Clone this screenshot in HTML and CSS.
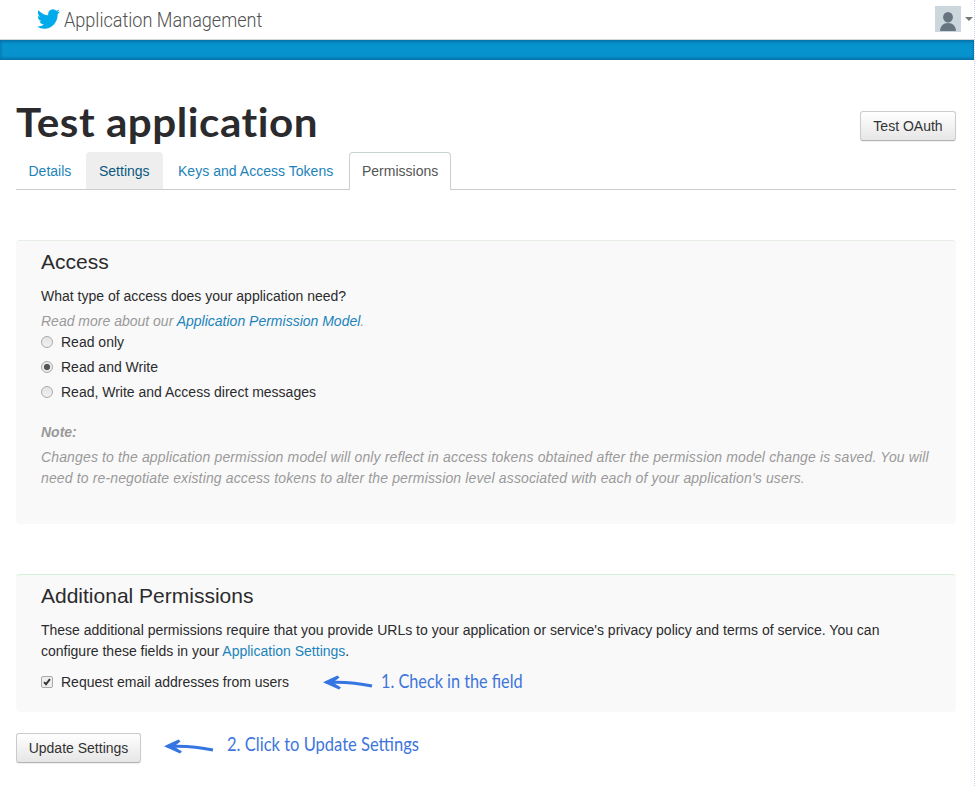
FILE: index.html
```html
<!DOCTYPE html>
<html lang="en">
<head>
<meta charset="utf-8">
<title>Application Management</title>
<link rel="stylesheet" href="styles.css">
</head>
<body>
<header class="topbar">
  <a class="brand">
    <svg class="bird" viewBox="0 2 24 20" preserveAspectRatio="none"><path d="M23.953 4.57a10 10 0 01-2.825.775 4.958 4.958 0 002.163-2.723c-.951.555-2.005.959-3.127 1.184a4.92 4.92 0 00-8.384 4.482C7.69 8.095 4.067 6.13 1.64 3.162a4.822 4.822 0 00-.666 2.475c0 1.71.87 3.213 2.188 4.096a4.904 4.904 0 01-2.228-.616v.06a4.923 4.923 0 003.946 4.827 4.996 4.996 0 01-2.212.085 4.936 4.936 0 004.604 3.417 9.867 9.867 0 01-6.102 2.105c-.39 0-.779-.023-1.17-.067a13.995 13.995 0 007.557 2.209c9.053 0 13.998-7.496 13.998-13.985 0-.21 0-.42-.015-.63A9.935 9.935 0 0024 4.59z"/></svg>
    <span class="brand-name">Application Management</span>
  </a>
  <div class="account">
    <svg class="avatar" viewBox="0 0 26 26"><rect width="26" height="26" fill="#ccd6dd"/><ellipse cx="13" cy="11.2" rx="4.9" ry="5.2" fill="#66757f"/><path d="M5 25c.4-5.300 3.300-8 8-8s7.600 2.700 8 8z" fill="#66757f"/></svg>
    <span class="caret"></span>
  </div>
</header>
<div class="band"></div>
<main class="page">
  <div class="title-row">
    <h1>Test application</h1>
    <button class="btn oauth">Test OAuth</button>
  </div>
  <nav class="tabs">
    <a class="tab details">Details</a>
    <a class="tab hover">Settings</a>
    <a class="tab keys">Keys and Access Tokens</a>
    <a class="tab active">Permissions</a>
  </nav>
  <section class="well access">
    <h2>Access</h2>
    <p class="question">What type of access does your application need?</p>
    <p class="hint">Read more about our <a>Application Permission Model</a>.</p>
    <div class="option"><span class="radio"></span>Read only</div>
    <div class="option"><span class="radio checked"></span>Read and Write</div>
    <div class="option"><span class="radio"></span>Read, Write and Access direct messages</div>
    <p class="hint note-title">Note:</p>
    <p class="hint note">Changes to the application permission model will only reflect in access tokens obtained after the permission model change is saved. You will<br>need to re-negotiate existing access tokens to alter the permission level associated with each of your application's users.</p>
  </section>
  <section class="well additional">
    <h2>Additional Permissions</h2>
    <p>These additional permissions require that you provide URLs to your application or service's privacy policy and terms of service. You can<br>configure these fields in your <a>Application Settings</a>.</p>
    <div class="check-row">
      <span class="box"><svg viewBox="0 0 12 12"><path d="M2.500 6.200l2.300 2.500 4.700-6.200" fill="none" stroke="#333" stroke-width="2.300"/></svg></span>
      <span class="check-label">Request email addresses from users</span>
      <svg class="arrow" viewBox="0 0 50 16"><path d="M3 7.500Q26 6 49 11" fill="none" stroke="#3575e2" stroke-width="3"/><path d="M0 7.200L14.500 .5 16.500 2.500 10 7.500 18 12.500 16 14.500Z" fill="#3575e2"/></svg>
      <span class="script first">1. Check in the field</span>
    </div>
  </section>
  <div class="submit">
    <button class="btn update">Update Settings</button>
    <svg class="arrow" viewBox="0 0 50 16"><path d="M3 7.500Q26 6 49 11" fill="none" stroke="#3575e2" stroke-width="3"/><path d="M0 7.200L14.500 .5 16.500 2.500 10 7.500 18 12.500 16 14.500Z" fill="#3575e2"/></svg>
    <span class="script second">2. Click to Update Settings</span>
  </div>
</main>
</body>
</html>
```
FILE: styles.css
```css
* { box-sizing: border-box; }
body { margin: 0; width: 975px; height: 786px; overflow: hidden; background: #fff; border-right: 1px dotted #cfcfe6; color: #2b2b2d; font: 14px/21px "Liberation Sans", Arial, sans-serif; }
h1, h2, p { margin: 0; }
a { color: #1b83ba; }
.topbar { height: 40px; display: flex; justify-content: space-between; border-bottom: 1px solid #d2d8d8; padding: 0 0 0 37px; }
.brand { display: flex; align-items: flex-start; }
.bird { width: 23px; height: 20px; margin: 9px 4px 0 0; fill: #00aaeb; }
.brand-name { color: #505050; font: 300 20px/40px Roboto, sans-serif; white-space: nowrap; transform-origin: left; transform: scaleX(.904); }
.account { display: flex; align-items: flex-start; padding-top: 6px; }
.avatar { width: 26px; height: 26px; }
.caret { margin: 11px 1px 0 4px; border: 4px solid transparent; border-top-color: #777; border-bottom: 0; }
.band { height: 20px; background: #0793ce; box-shadow: inset 0 2px 3px #0871a8, inset 0 -2px 3px #0872a7; }
.page { padding: 0 18px 0 16px; }
.title-row { height: 92px; display: flex; justify-content: space-between; align-items: flex-start; }
h1 { margin-top: 37px; font: 700 40px/50px Lato, sans-serif; white-space: nowrap; letter-spacing: .5px; transform-origin: left; transform: scaleX(1.055); }
.btn { height: 30px; padding: 0; border: 1px solid #c9cccb; border-bottom-color: #b3b3b3; border-radius: 3px; background: linear-gradient(#fff, #e6e6e6); color: #333; font: 14px/26px "Liberation Sans", Arial, sans-serif; white-space: nowrap; box-shadow: 0 1px 1px #f0f0f0; }
.oauth { width: 96px; margin-top: 51px; }
.tabs { display: flex; height: 38px; border-bottom: 1px solid #c9cdcb; }
.tab { height: 38px; padding: 8px 0 0 12px; margin-right: 2px; border: 1px solid transparent; border-bottom: 0; border-radius: 4px 4px 0 0; white-space: nowrap; }
.tab.details { width: 68px; padding-left: 11.5px; }
.tab.hover { width: 77px; height: 37px; background: #eee; color: #08587e; }
.tab.keys { width: 182px; letter-spacing: .03px; }
.tab.active { width: 102px; margin: 0; background: #fff; border-color: #c9d2cc; color: #555; }
.well { background: #f9f9f9; border-top: 1px solid #e6eee6; border-radius: 4px; padding: 0 25px; white-space: nowrap; }
.access { margin-top: 50px; height: 284px; }
.additional { margin-top: 50px; height: 138px; border-top-color: #d5f0d5; }
h2 { padding-top: 7px; height: 45px; font: 400 21px/27px "Liberation Sans", Arial, sans-serif; }
.question { height: 25px; }
.hint { color: #999; font-style: italic; }
.option { height: 25px; display: flex; align-items: flex-start; }
.radio { width: 12px; height: 12px; margin: 4px 8px 0 0; border: 1px solid #aaa; border-radius: 50%; background: linear-gradient(#e4e4e4, #f0f0f0); }
.radio.checked { background: radial-gradient(circle, #555 0 2.8px, #e9e9e9 3.4px); }
.note-title { margin-top: 15px; height: 25px; font-weight: 700; }
.note { letter-spacing: .14px; }
.check-row { display: flex; align-items: flex-start; margin-top: 10px; }
.box { width: 12px; height: 12px; margin: 4px 8px 0 0; border: 1px solid #aaa; border-radius: 2px; background: #eee; display: flex; }
.box svg { width: 10px; height: 10px; }
.check-label { width: 262px; }
.arrow { width: 50px; height: 16px; flex: none; margin-top: 3px; }
.script { color: #3d75da; font: 400 19px/22px Lato, sans-serif; white-space: nowrap; transform-origin: left; }
.first { margin: -2px 0 0 8px; transform: scaleX(.855); }
.submit { display: flex; align-items: flex-start; margin-top: 21px; }
.update { width: 125px; }
.submit .arrow { margin: 6px 13px 0 23px; }
.second { transform: scaleX(.87); }
```
